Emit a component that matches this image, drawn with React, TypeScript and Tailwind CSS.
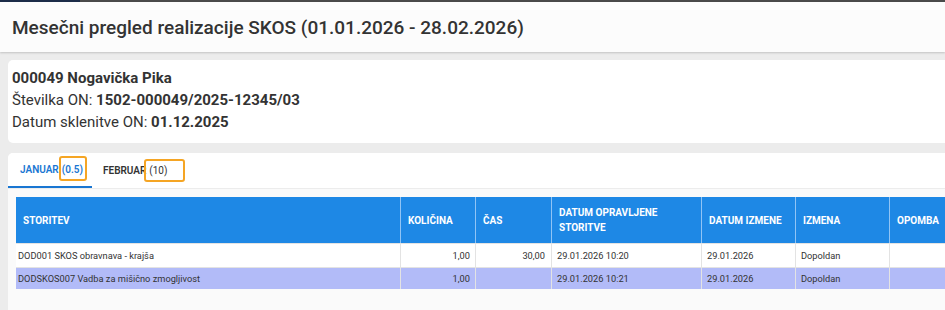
import React from 'react'

const cols = [
    { label: 'STORITEV', w: 'w-[384px]' },
    { label: 'KOLIČINA', w: 'w-[75px]' },
    { label: 'ČAS', w: 'w-[76px]' },
    { label: 'DATUM OPRAVLJENE STORITVE', w: 'w-[150px]' },
    { label: 'DATUM IZMENE', w: 'w-[94px]' },
    { label: 'IZMENA', w: 'w-[94px]' },
    { label: 'OPOMBA', w: 'w-[94px]' },
]

const rows = [
    { storitev: 'DOD001 SKOS obravnava - krajša', kolicina: '1,00', cas: '30,00', datum: '29.01.2026 10:20', izmena: '29.01.2026', tip: 'Dopoldan', bg: 'bg-white' },
    { storitev: 'DODSKOS007 Vadba za mišično zmogljivost', kolicina: '1,00', cas: '', datum: '29.01.2026 10:21', izmena: '29.01.2026', tip: 'Dopoldan', bg: 'bg-[#b2bbf8]' },
]

export default function App() {
    return (
        <div className="w-[945px] h-[310px] overflow-hidden bg-[#ececec] font-['Roboto',sans-serif] text-[#333]">
            {/* top strip */}
            <div className="flex h-[2px] bg-[#4a4a4a]">
                <div className="w-[80px] bg-[#1c2c48]" />
            </div>

            <div className="h-[50px] bg-[#fcfcfc] shadow-[0_1px_2px_rgba(0,0,0,0.18)] flex items-center px-3">
                <h1 className="text-[19px] font-medium text-[#333] leading-none">Mesečni pregled realizacije SKOS (01.01.2026 - 28.02.2026)</h1>
            </div>

            <div className="pl-2 pt-2">
                <div className="bg-white rounded-l-[5px] h-[83px] px-1 pt-[7px] text-[15px] leading-[22px] text-[#333]">
                    <p className="font-bold">000049 Nogavička Pika</p>
                    <p>Številka ON: <span className="font-bold">1502-000049/2025-12345/03</span></p>
                    <p>Datum sklenitve ON: <span className="font-bold">01.12.2025</span></p>
                </div>

                <div className="mt-[10px] bg-[#fafafa] rounded-tl-[5px] h-[160px]">
                    <div className="flex bg-white rounded-tl-[5px] border-b border-[#ececec] h-[36px] text-[10px] leading-[15px] font-semibold">
                        <div className="w-[84px] flex items-center pl-3 text-[#1976d2] border-b-2 border-[#1976d2]">
                            <span>JANUAR</span>
                            <span className="relative ml-[3px]">
                                (0.5)
                                <span className="absolute -left-[3px] -right-[4px] -top-[6px] h-[25px] rounded-[3px] border-2 border-[#f5a524]" />
                            </span>
                        </div>
                        <div className="flex items-center pl-[11px] text-[#333]">
                            <span>FEBRUAR</span>
                            <span className="relative ml-[3px] font-normal">
                                (10)
                                <span className="absolute -left-[5px] -right-[18px] -top-[4px] h-[23px] rounded-[3px] border-2 border-[#f5a524]" />
                            </span>
                        </div>
                    </div>

                    <div className="pl-2 pt-2">
                        <div className="w-[967px]">
                            <div className="flex h-[46px] bg-[#1e88e5] text-white text-[10px] font-bold leading-[15px]">
                                {cols.map((c, i) => (
                                    <div key={c.label} className={`${c.w} shrink-0 flex items-center px-[7px] ${i > 0 ? 'border-l border-[#90c4f5]' : ''}`}>
                                        {c.label === 'DATUM OPRAVLJENE STORITVE' ? <span>DATUM OPRAVLJENE<br />STORITVE</span> : c.label}
                                    </div>
                                ))}
                            </div>
                            {rows.map((r, idx) => (
                                <div key={idx} className={`flex ${idx === 0 ? 'h-[24px]' : 'h-[22px]'} ${r.bg} text-[9.25px] text-[#333] border-t border-[#e3e3e3]`}>
                                    <div className="w-[384px] shrink-0 flex items-center pl-[2px]">{r.storitev}</div>
                                    <div className="w-[75px] shrink-0 flex items-center justify-end pr-[5px] border-l border-[#e3e3e3]">{r.kolicina}</div>
                                    <div className="w-[76px] shrink-0 flex items-center justify-end pr-[6px] border-l border-[#e3e3e3]">{r.cas}</div>
                                    <div className="w-[150px] shrink-0 flex items-center pl-[5px] border-l border-[#e3e3e3]">{r.datum}</div>
                                    <div className="w-[94px] shrink-0 flex items-center pl-[5px] border-l border-[#e3e3e3]">{r.izmena}</div>
                                    <div className="w-[94px] shrink-0 flex items-center pl-[5px] border-l border-[#e3e3e3]">{r.tip}</div>
                                    <div className="w-[94px] shrink-0 border-l border-[#e3e3e3]" />
                                </div>
                            ))}
                        </div>
                    </div>
                </div>
            </div>
        </div>
    )
}
